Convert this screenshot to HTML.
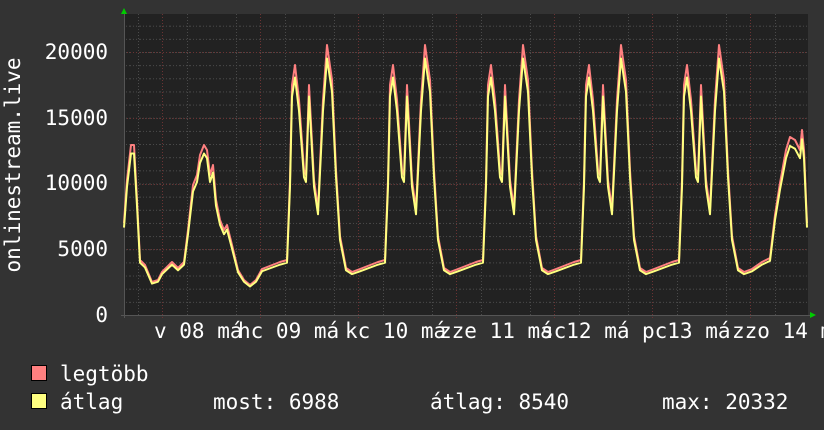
<!DOCTYPE html>
<html><head><meta charset="utf-8"><style>
html,body{margin:0;padding:0;background:#333;}
svg{display:block}
text{font-family:"DejaVu Sans Mono","Liberation Mono",monospace;fill:#fff;font-size:21px}
</style></head><body>
<svg width="824" height="430" viewBox="0 0 824 430" xmlns="http://www.w3.org/2000/svg">
<rect width="824" height="430" fill="#333"/>
<rect x="124" y="14" width="684" height="301" fill="#222"/>
<defs>
<pattern id="minh" x="0" y="0" width="10" height="13.15" patternUnits="userSpaceOnUse" patternTransform="translate(0,315)">
<line x1="0" y1="0.5" x2="10" y2="0.5" stroke="#4a4a4a" stroke-dasharray="1 2"/>
</pattern>
</defs>
<rect x="124" y="14" width="684" height="301" fill="url(#minh)"/>
<g stroke="#4a4a4a" stroke-dasharray="1 2">
<line x1="138.5" y1="14" x2="138.5" y2="315"/><line x1="187.5" y1="14" x2="187.5" y2="315"/>
<line x1="236.5" y1="14" x2="236.5" y2="315"/><line x1="285.5" y1="14" x2="285.5" y2="315"/>
<line x1="334.5" y1="14" x2="334.5" y2="315"/><line x1="383.5" y1="14" x2="383.5" y2="315"/>
<line x1="432.5" y1="14" x2="432.5" y2="315"/><line x1="481.5" y1="14" x2="481.5" y2="315"/>
<line x1="530.5" y1="14" x2="530.5" y2="315"/><line x1="579.5" y1="14" x2="579.5" y2="315"/>
<line x1="628.5" y1="14" x2="628.5" y2="315"/><line x1="677.5" y1="14" x2="677.5" y2="315"/>
<line x1="726.5" y1="14" x2="726.5" y2="315"/><line x1="775.5" y1="14" x2="775.5" y2="315"/>
</g>
<g stroke="#6b3333" stroke-dasharray="1 2">
<line x1="124" y1="52.5" x2="808" y2="52.5"/><line x1="124" y1="118.5" x2="808" y2="118.5"/>
<line x1="124" y1="184.5" x2="808" y2="184.5"/><line x1="124" y1="249.5" x2="808" y2="249.5"/>
<line x1="162.5" y1="14" x2="162.5" y2="318"/><line x1="260.5" y1="14" x2="260.5" y2="318"/>
<line x1="358.5" y1="14" x2="358.5" y2="318"/><line x1="456.5" y1="14" x2="456.5" y2="318"/>
<line x1="554.5" y1="14" x2="554.5" y2="318"/><line x1="652.5" y1="14" x2="652.5" y2="318"/>
<line x1="750.5" y1="14" x2="750.5" y2="318"/>
</g>
<line x1="121" y1="315.5" x2="810" y2="315.5" stroke="#555"/>
<line x1="124.5" y1="10" x2="124.5" y2="318" stroke="#555"/>
<polygon points="121,14 127,14 124,8" fill="#0c0"/>
<polygon points="810,312 810,318 816,315" fill="#0c0"/>
<g fill="none" stroke-width="2" stroke-linejoin="round">
<polyline stroke="#ff8080" points="124,223 127,180 131,145 134,145 137,200 140,260 145,265 152,282 158,280 162,272 172,262 178,268 184,262 188,230 193,185 197,175 200,155 204,145 207,150 210,175 213,165 216,200 220,220 224,230 227,225 232,245 238,270 244,280 250,285 256,280 262,269 280,262 287,260 290,180 292,85 295,65 299,100 304,170 306,175 309,85 314,180 318,209 323,100 327,45 332,80 336,170 340,236 346,268 352,272 360,269 378,262 385,260 388,180 390,85 393,65 397,100 402,170 404,175 407,85 412,180 416,209 421,100 425,45 430,80 434,170 438,236 444,268 450,272 458,269 476,262 483,260 486,180 488,85 491,65 495,100 500,170 502,175 505,85 510,180 514,209 519,100 523,45 528,80 532,170 536,236 542,268 548,272 556,269 574,262 581,260 584,180 586,85 589,65 593,100 598,170 600,175 603,85 608,180 612,209 617,100 621,45 626,80 630,170 634,236 640,268 646,272 654,269 672,262 679,260 682,180 684,85 687,65 691,100 696,170 698,175 701,85 706,180 710,209 715,100 719,45 724,80 728,170 732,236 738,268 744,272 752,269 762,262 770,258 775,215 780,183 786,150 790,137 795,140 800,150 802,130 804,150 807,223"/>
<polyline stroke="#ffff80" transform="matrix(1,0,0,0.95,0,15.75)" points="124,223 127,180 131,145 134,145 137,200 140,260 145,265 152,282 158,280 162,272 172,262 178,268 184,262 188,230 193,185 197,175 200,155 204,145 207,150 210,175 213,165 216,200 220,220 224,230 227,225 232,245 238,270 244,280 250,285 256,280 262,269 280,262 287,260 290,180 292,85 295,65 299,100 304,170 306,175 309,85 314,180 318,209 323,100 327,45 332,80 336,170 340,236 346,268 352,272 360,269 378,262 385,260 388,180 390,85 393,65 397,100 402,170 404,175 407,85 412,180 416,209 421,100 425,45 430,80 434,170 438,236 444,268 450,272 458,269 476,262 483,260 486,180 488,85 491,65 495,100 500,170 502,175 505,85 510,180 514,209 519,100 523,45 528,80 532,170 536,236 542,268 548,272 556,269 574,262 581,260 584,180 586,85 589,65 593,100 598,170 600,175 603,85 608,180 612,209 617,100 621,45 626,80 630,170 634,236 640,268 646,272 654,269 672,262 679,260 682,180 684,85 687,65 691,100 696,170 698,175 701,85 706,180 710,209 715,100 719,45 724,80 728,170 732,236 738,268 744,272 752,269 762,262 770,258 775,215 780,183 786,150 790,137 795,140 800,150 802,130 804,150 807,223"/>
</g>
<g text-anchor="end">
<text x="108" y="59">20000</text><text x="108" y="125">15000</text>
<text x="108" y="190">10000</text><text x="108" y="256">5000</text><text x="108" y="322">0</text>
</g>
<text transform="translate(20,165) rotate(-90)" text-anchor="middle" font-size="21">onlinestream.live</text>
<g>
<text x="154" y="338">v 08 má</text><text x="238" y="338">hc 09 má</text>
<text x="345" y="338">kc 10 má</text><text x="439" y="338">zze 11 má</text>
<text x="541" y="338">sc12 má</text><text x="642" y="338">pc13 má</text>
<text x="732" y="338">zzo 14 m</text>
</g>
<rect x="31.5" y="365.5" width="15" height="15" fill="#ff8080" stroke="#000"/>
<rect x="31.5" y="393.5" width="15" height="15" fill="#ffff80" stroke="#000"/>
<text x="60" y="381">legtöbb</text>
<text x="60" y="409">átlag</text>
<text x="213" y="409">most: 6988</text>
<text x="430" y="409">átlag: 8540</text>
<text x="662" y="409">max: 20332</text>
</svg>
</body></html>
